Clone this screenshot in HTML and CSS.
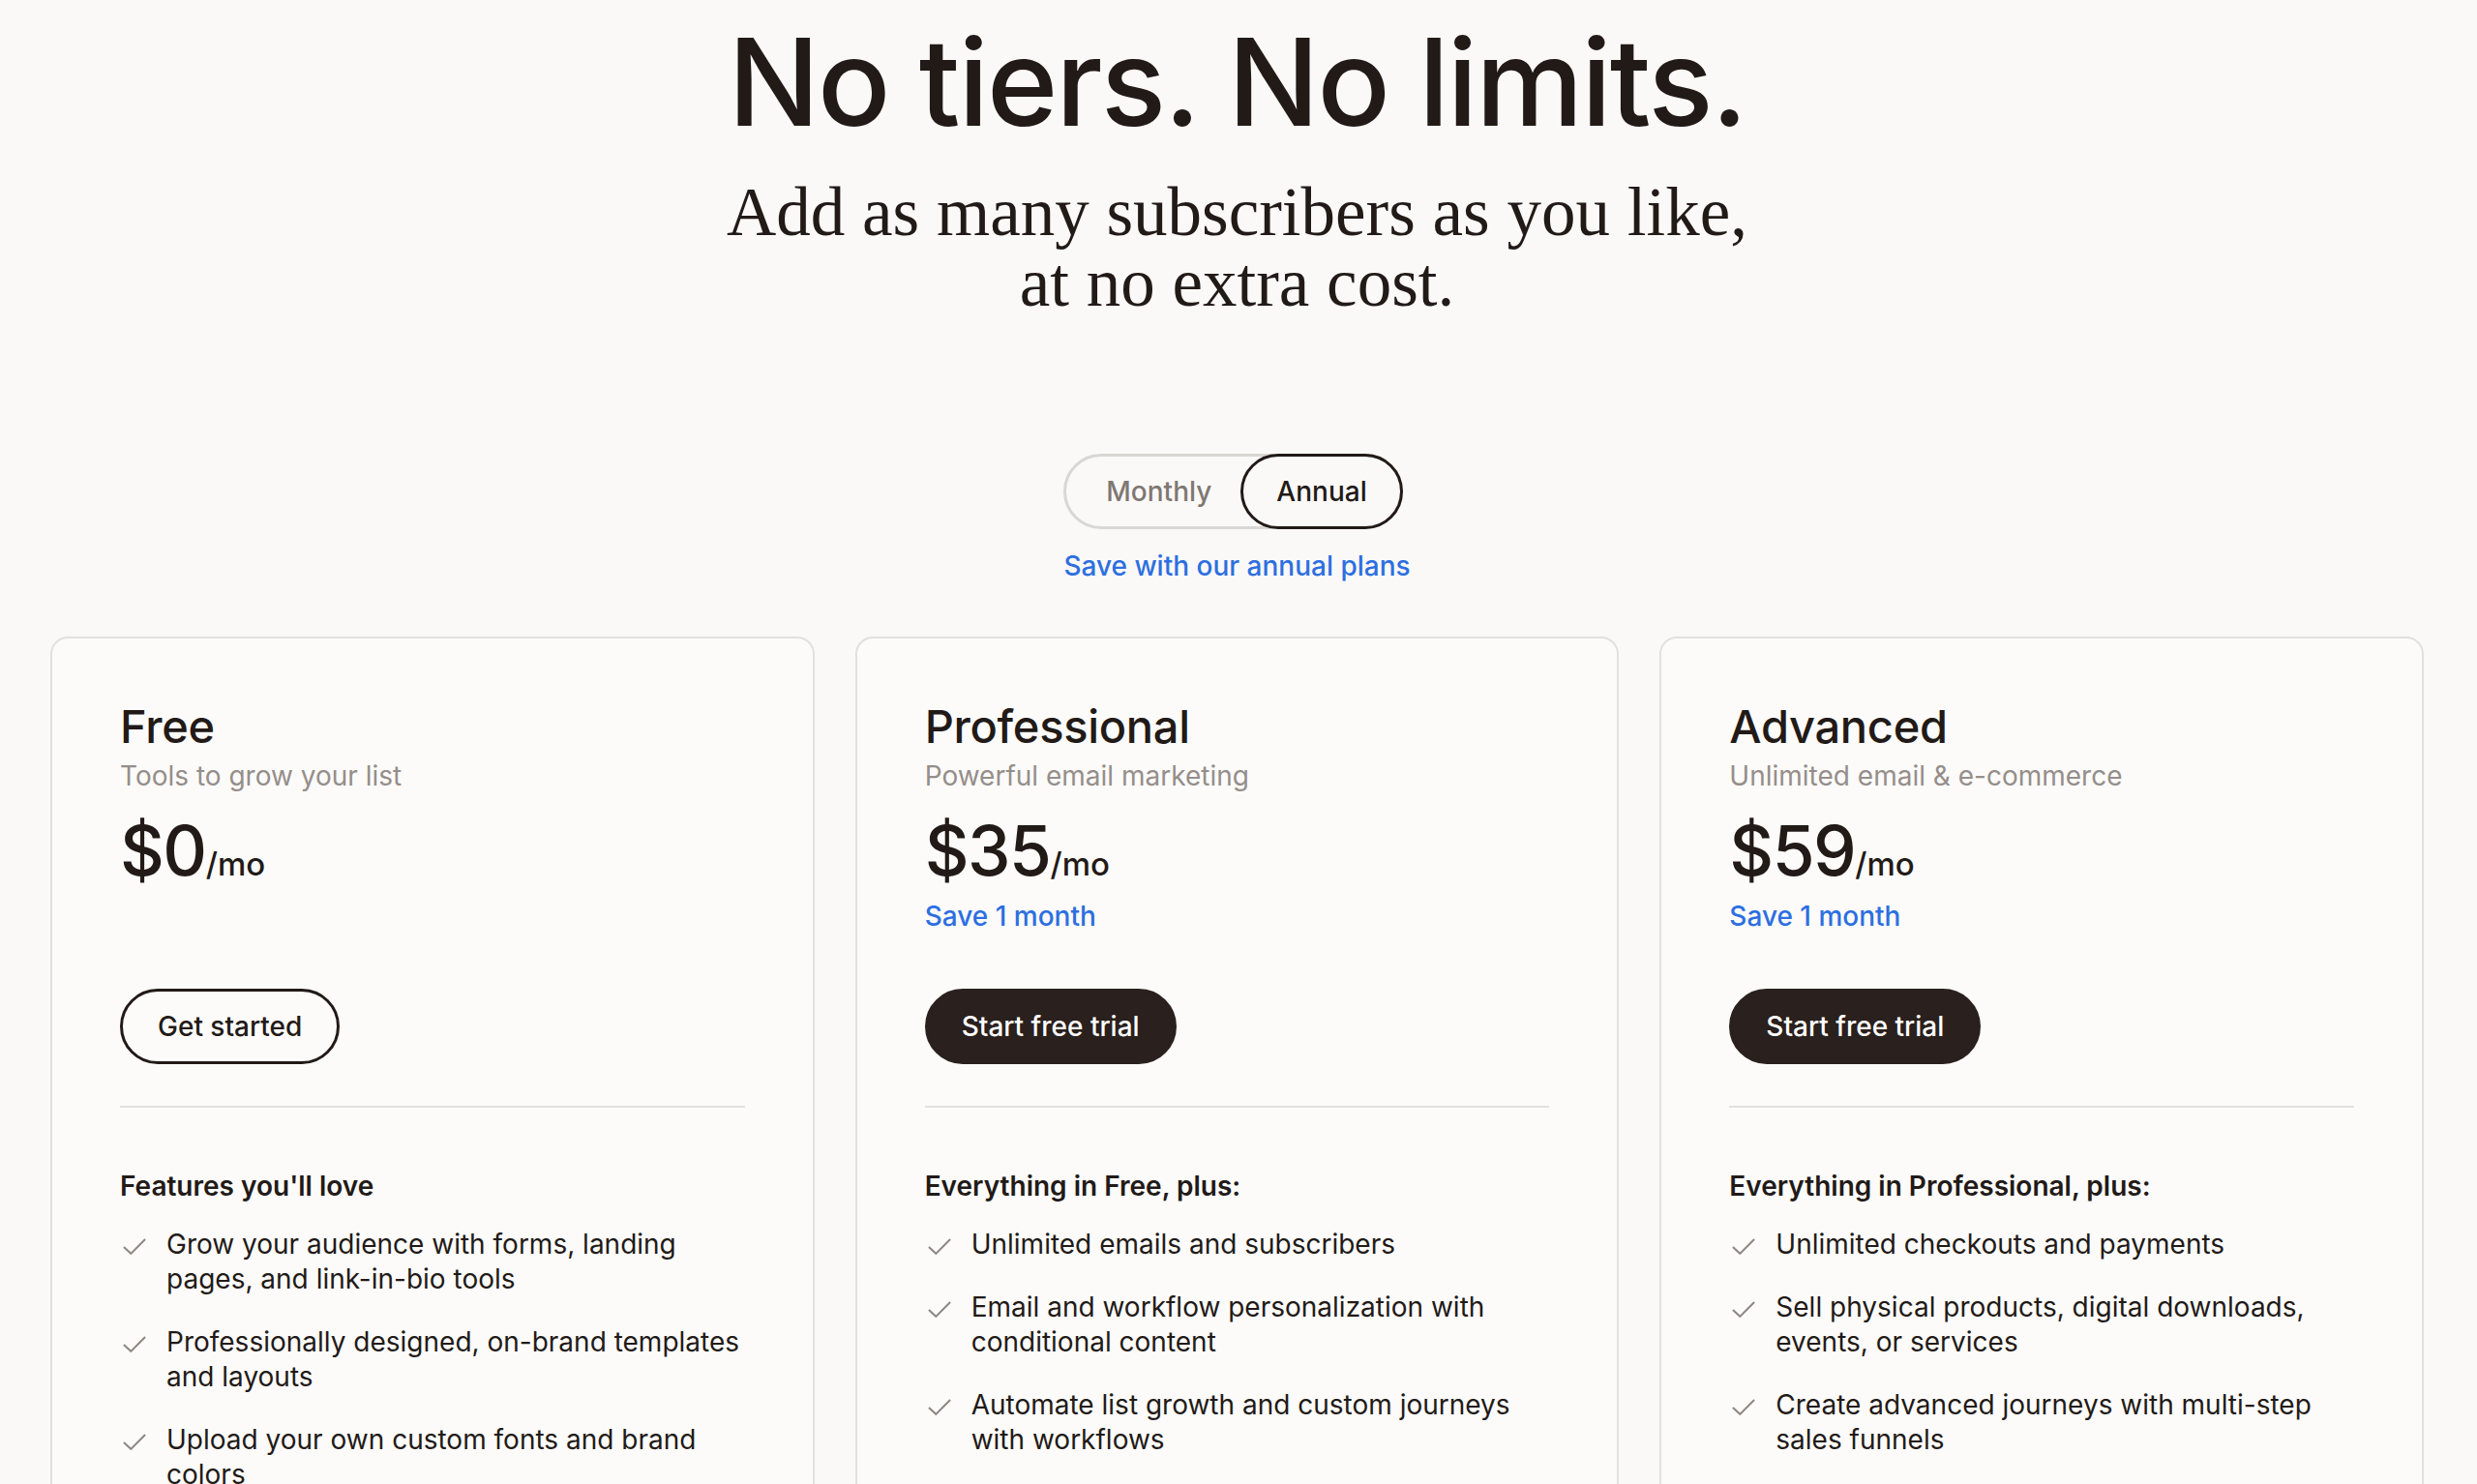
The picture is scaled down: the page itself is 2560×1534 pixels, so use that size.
FILE: index.html
```html
<!DOCTYPE html>
<html lang="en">
<head>
    <meta charset="UTF-8">
    <meta name="viewport" content="width=device-width, initial-scale=1.0">
    <title>Pricing</title>
    <link rel="stylesheet" href="styles.css">
</head>
<body>

<header class="hero">
    <h1>No tiers. No limits.</h1>
    <p class="lead">Add as many subscribers as you like,<br>at no extra cost.</p>
</header>

<div class="billing">
    <div class="toggle">
        <button class="toggle-option">Monthly</button>
        <button class="toggle-option active">Annual</button>
    </div>
    <p class="billing-note">Save with our annual plans</p>
</div>

<section class="plans">
    <article class="plan">
        <h2>Free</h2>
        <p class="plan-tagline">Tools to grow your list</p>
        <p class="price">$0<span>/mo</span></p>
        <p class="saving empty">&nbsp;</p>
        <a class="btn btn-outline" href="#">Get started</a>
        <hr>
        <h3>Features you'll love</h3>
        <ul class="features">
            <li><svg class="check" viewBox="0 0 24 18"><path d="M1.5 9.5 L8.5 16 L22.5 2"/></svg>Grow your audience with forms, landing pages, and link-in-bio tools</li>
            <li><svg class="check" viewBox="0 0 24 18"><path d="M1.5 9.5 L8.5 16 L22.5 2"/></svg>Professionally designed, on-brand templates and layouts</li>
            <li><svg class="check" viewBox="0 0 24 18"><path d="M1.5 9.5 L8.5 16 L22.5 2"/></svg>Upload your own custom fonts and brand colors</li>
        </ul>
    </article>

    <article class="plan">
        <h2>Professional</h2>
        <p class="plan-tagline">Powerful email marketing</p>
        <p class="price">$35<span>/mo</span></p>
        <p class="saving">Save 1 month</p>
        <a class="btn btn-dark" href="#">Start free trial</a>
        <hr>
        <h3>Everything in Free, plus:</h3>
        <ul class="features">
            <li><svg class="check" viewBox="0 0 24 18"><path d="M1.5 9.5 L8.5 16 L22.5 2"/></svg>Unlimited emails and subscribers</li>
            <li><svg class="check" viewBox="0 0 24 18"><path d="M1.5 9.5 L8.5 16 L22.5 2"/></svg>Email and workflow personalization with conditional content</li>
            <li><svg class="check" viewBox="0 0 24 18"><path d="M1.5 9.5 L8.5 16 L22.5 2"/></svg>Automate list growth and custom journeys with workflows</li>
        </ul>
    </article>

    <article class="plan">
        <h2>Advanced</h2>
        <p class="plan-tagline">Unlimited email &amp; e-commerce</p>
        <p class="price">$59<span>/mo</span></p>
        <p class="saving">Save 1 month</p>
        <a class="btn btn-dark" href="#">Start free trial</a>
        <hr>
        <h3>Everything in Professional, plus:</h3>
        <ul class="features">
            <li><svg class="check" viewBox="0 0 24 18"><path d="M1.5 9.5 L8.5 16 L22.5 2"/></svg>Unlimited checkouts and payments</li>
            <li><svg class="check" viewBox="0 0 24 18"><path d="M1.5 9.5 L8.5 16 L22.5 2"/></svg>Sell physical products, digital downloads, events, or services</li>
            <li><svg class="check" viewBox="0 0 24 18"><path d="M1.5 9.5 L8.5 16 L22.5 2"/></svg>Create advanced journeys with multi-step sales funnels</li>
        </ul>
    </article>
</section>

</body>
</html>
```

FILE: styles.css
```css
body {
    font-family: 'Inter', 'Liberation Sans', sans-serif;
    background-color: #faf9f7;
    color: #221a17;
    margin: 0;
    padding: 0 55px 0 52px;
}
.hero {
    text-align: center;
    padding-top: 10px;
}
h1 {
    font-size: 125px;
    font-weight: 500;
    letter-spacing: -2px;
    line-height: 1.2;
    margin: 0;
}
.lead {
    font-family: 'Liberation Serif', 'DejaVu Serif', serif;
    font-size: 71px;
    line-height: 73px;
    margin: 23px 0 0;
}
.billing {
    display: flex;
    flex-direction: column;
    align-items: center;
    margin-top: 140px;
}
.toggle {
    display: flex;
    border: 3px solid #d9d6d3;
    border-radius: 40px;
    height: 72px;
    margin-right: 8px;
}
.toggle-option {
    font-family: inherit;
    font-size: 28px;
    font-weight: 500;
    color: #7f7773;
    background: none;
    border: 3px solid transparent;
    border-radius: 40px;
    padding: 0 33px 0 41px;
    margin: -3px;
    height: 78px;
    cursor: pointer;
}
.toggle-option.active {
    color: #221a17;
    border-color: #221a17;
    padding: 0 34px;
}
.billing-note {
    color: #2d6fe0;
    font-size: 28px;
    font-weight: 500;
    margin: 21px 0 0;
}
.plans {
    display: grid;
    grid-template-columns: repeat(3, 1fr);
    gap: 42px;
    margin-top: 56px;
}
.plan {
    background-color: #fcfbfa;
    border: 2px solid #e3e0dd;
    border-radius: 18px;
    padding: 61px 70px 300px;
    display: flex;
    flex-direction: column;
    align-items: flex-start;
}
.plan h2 {
    font-size: 47px;
    font-weight: 500;
    letter-spacing: -0.3px;
    line-height: 60px;
    margin: 0;
}
.plan-tagline {
    color: #958e8a;
    font-size: 28px;
    line-height: 40px;
    margin: 1px 0 0;
}
.price {
    font-size: 71px;
    font-weight: 500;
    line-height: 80px;
    letter-spacing: -1.5px;
    margin: 17px 0 0;
}
.price span {
    font-size: 33px;
    letter-spacing: 0;
}
.saving {
    color: #2d6fe0;
    font-size: 28px;
    font-weight: 500;
    line-height: 40px;
    margin: -6px 0 0;
}
.saving.empty {
    visibility: hidden;
}
.btn {
    display: inline-flex;
    align-items: center;
    height: 78px;
    box-sizing: border-box;
    padding: 0 36px;
    border-radius: 40px;
    border: 3px solid #221a17;
    font-size: 28px;
    font-weight: 500;
    text-decoration: none;
    margin-top: 55px;
}
.btn-outline {
    color: #221a17;
}
.btn-dark {
    background-color: #2a201d;
    border-color: #2a201d;
    color: #ffffff;
    padding: 0 35px;
}
.plan hr {
    align-self: stretch;
    border: 0;
    border-top: 2px solid #e3e0dd;
    margin: 43px 0 0;
}
.plan h3 {
    font-size: 28px;
    font-weight: 600;
    line-height: 40px;
    margin: 61px 0 0;
}
.features {
    list-style: none;
    padding: 0;
    margin: 22px 0 0;
}
.features li {
    display: flex;
    align-items: flex-start;
    gap: 20px;
    font-size: 28px;
    line-height: 36px;
    margin-bottom: 29px;
}
.check {
    flex: none;
    width: 26px;
    height: 19px;
    margin: 11px 0 0 2px;
    fill: none;
    stroke: #8f8884;
    stroke-width: 2;
}
```
